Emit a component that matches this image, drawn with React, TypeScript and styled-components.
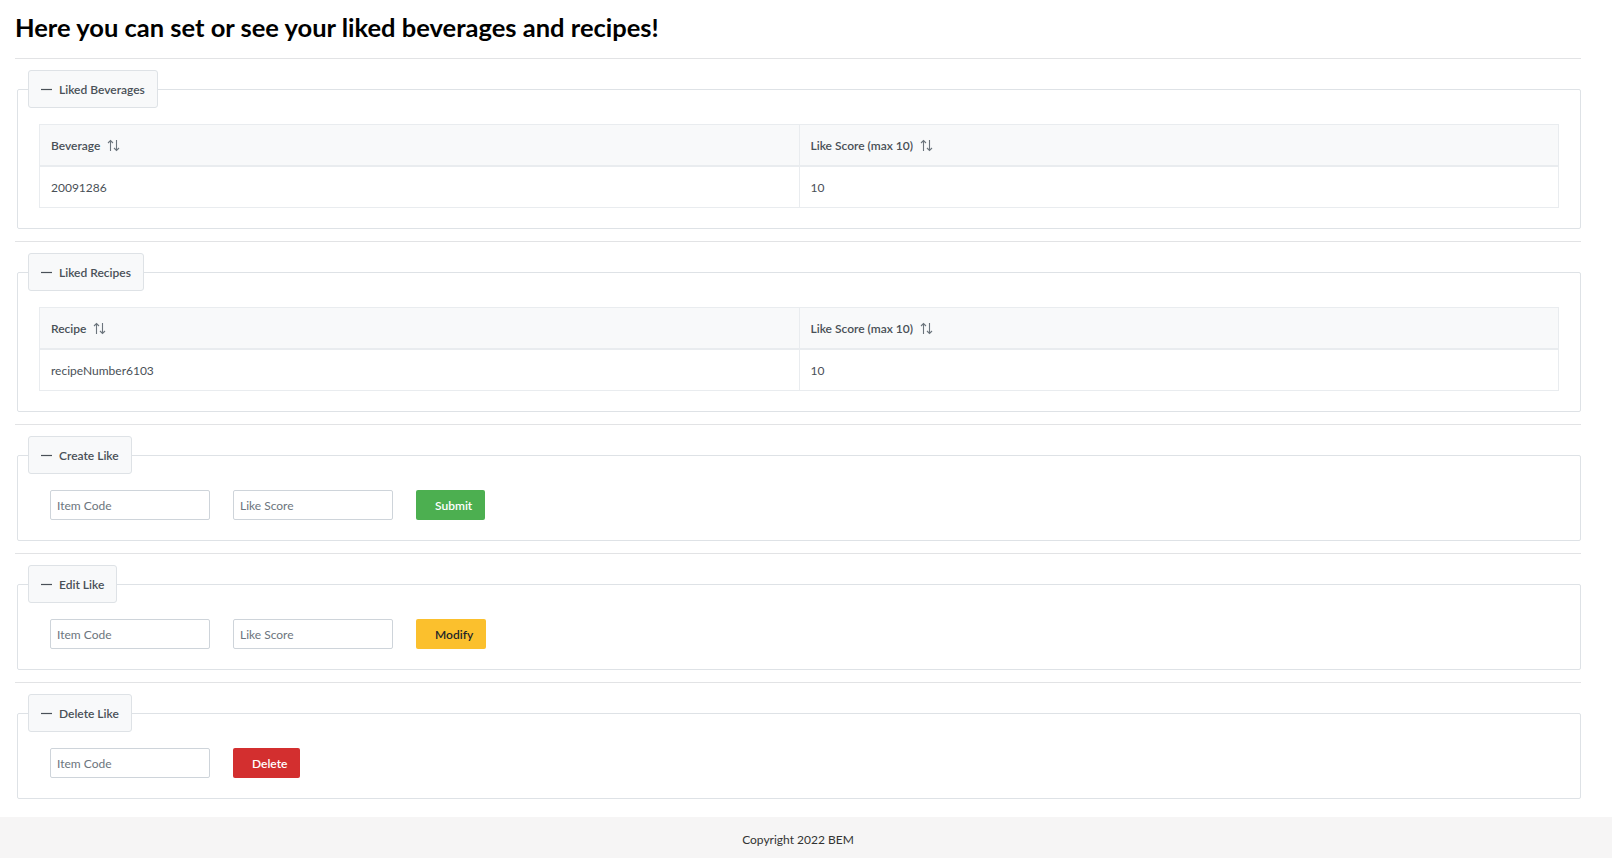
import React from 'react';
import styled, { createGlobalStyle } from 'styled-components';

const GlobalStyle = createGlobalStyle`
  html, body {
    margin: 0;
    padding: 0;
    background: #ffffff;
    font-family: Lato, "Liberation Sans", Arial, sans-serif;
    color: #495057;
  }
`;

const Page = styled.div`
  display: flex;
  flex-direction: column;
  min-height: 100vh;
`;

const Main = styled.main`
  padding: 13px 31px 18px 15px;
  flex: 1;
`;

const Heading = styled.h2`
  margin: 0 0 16px 0;
  font-size: 25.5px;
  font-weight: 700;
  color: #000;
  line-height: 29px;
`;

const Rule = styled.hr`
  border: none;
  border-top: 1px solid #e2e3e5;
  margin: 0 0 11px 0;
  &:not(:first-of-type) {
    margin-top: 12px;
  }
`;

const Fieldset = styled.fieldset`
  margin: 0 0 0 2px;
  padding: 0 10px 20px 10px;
  border: 1px solid #dee2e6;
  border-radius: 2px;
  min-width: 0;
`;

const Legend = styled.legend`
  display: flex;
  align-items: center;
  gap: 7px;
  height: 36px;
  padding: 0 12px 0 12px;
  box-sizing: content-box;
  background: #f8f9fa;
  border: 1px solid #dee2e6;
  border-radius: 3px;
  font-size: 12px;
  font-weight: 600;
  color: #495057;
`;

const Content = styled.div<{ $inset?: boolean }>`
  margin-top: 16px;
  padding: 0 ${({ $inset }) => ($inset ? '22px' : '11px')};
`;

const Table = styled.table`
  width: 100%;
  border-collapse: collapse;
  table-layout: fixed;
  font-size: 12px;
`;

const Th = styled.th`
  text-align: left;
  font-weight: 600;
  background: #f8f9fa;
  color: #495057;
  border: 1px solid #e9ecef;
  border-bottom-width: 2px;
  height: 40px;
  padding: 0 11px;
`;

const Td = styled.td`
  border: 1px solid #e9ecef;
  height: 40px;
  padding: 0 11px;
  color: #495057;
`;

const HeadInner = styled.span`
  display: inline-flex;
  align-items: center;
  gap: 7px;
`;

const SortIcon = styled.svg`
  width: 13px;
  height: 13px;
  color: #6c757d;
`;

const Row = styled.div`
  display: flex;
  align-items: center;
  gap: 23px;
`;

const Input = styled.input`
  width: 160px;
  height: 30px;
  box-sizing: border-box;
  border: 1px solid #ced4da;
  border-radius: 2px;
  padding: 0 6px;
  font-family: inherit;
  font-size: 12px;
  color: #495057;
  &::placeholder {
    color: #6c757d;
  }
`;

const tones = {
  success: { bg: '#4caf50', fg: '#ffffff' },
  warning: { bg: '#fbc02d', fg: '#212529' },
  danger: { bg: '#d32f2f', fg: '#ffffff' },
};

const Button = styled.button<{ $tone: keyof typeof tones }>`
  height: 30px;
  border: none;
  border-radius: 2px;
  padding: 0 13px 0 19px;
  font-family: inherit;
  font-size: 12px;
  font-weight: 600;
  background: ${({ $tone }) => tones[$tone].bg};
  color: ${({ $tone }) => tones[$tone].fg};
`;

const Footer = styled.footer`
  background: #f6f5f5;
  height: 42px;
  display: flex;
  align-items: center;
  justify-content: center;
  padding: 3px 16px 0 0;
  box-sizing: border-box;
  font-size: 12px;
  color: #333;
`;

const Minus = () => (
  <svg width="11" height="11" viewBox="0 0 11 11">
    <path d="M0 5.5h11" stroke="#495057" strokeWidth="1.2" />
  </svg>
);

const Sort = () => (
  <SortIcon viewBox="0 0 13 13" fill="none" stroke="currentColor" strokeWidth="1.1">
    <path d="M3.5 12V1.5M1 4l2.5-2.5L6 4" />
    <path d="M9.5 1v10.5M7 9l2.5 2.5L12 9" />
  </SortIcon>
);

const Section: React.FC<{ title: string; children: React.ReactNode; inset?: boolean }> = ({
  title,
  children,
  inset,
}) => (
  <>
    <Rule />
    <Fieldset>
      <Legend>
        <Minus />
        {title}
      </Legend>
      <Content $inset={inset}>{children}</Content>
    </Fieldset>
  </>
);

const LikeTable: React.FC<{ label: string; item: string; score: string }> = ({ label, item, score }) => (
  <Table>
    <thead>
      <tr>
        <Th>
          <HeadInner>
            {label}
            <Sort />
          </HeadInner>
        </Th>
        <Th>
          <HeadInner>
            Like Score (max 10)
            <Sort />
          </HeadInner>
        </Th>
      </tr>
    </thead>
    <tbody>
      <tr>
        <Td>{item}</Td>
        <Td>{score}</Td>
      </tr>
    </tbody>
  </Table>
);

export default function App() {
  return (
    <Page>
      <GlobalStyle />
      <Main>
        <Heading>Here you can set or see your liked beverages and recipes!</Heading>
        <Section title="Liked Beverages">
          <LikeTable label="Beverage" item="20091286" score="10" />
        </Section>
        <Section title="Liked Recipes">
          <LikeTable label="Recipe" item="recipeNumber6103" score="10" />
        </Section>
        <Section title="Create Like" inset>
          <Row>
            <Input placeholder="Item Code" />
            <Input placeholder="Like Score" />
            <Button $tone="success">Submit</Button>
          </Row>
        </Section>
        <Section title="Edit Like" inset>
          <Row>
            <Input placeholder="Item Code" />
            <Input placeholder="Like Score" />
            <Button $tone="warning">Modify</Button>
          </Row>
        </Section>
        <Section title="Delete Like" inset>
          <Row>
            <Input placeholder="Item Code" />
            <Button $tone="danger">Delete</Button>
          </Row>
        </Section>
      </Main>
      <Footer>Copyright 2022 BEM</Footer>
    </Page>
  );
}
